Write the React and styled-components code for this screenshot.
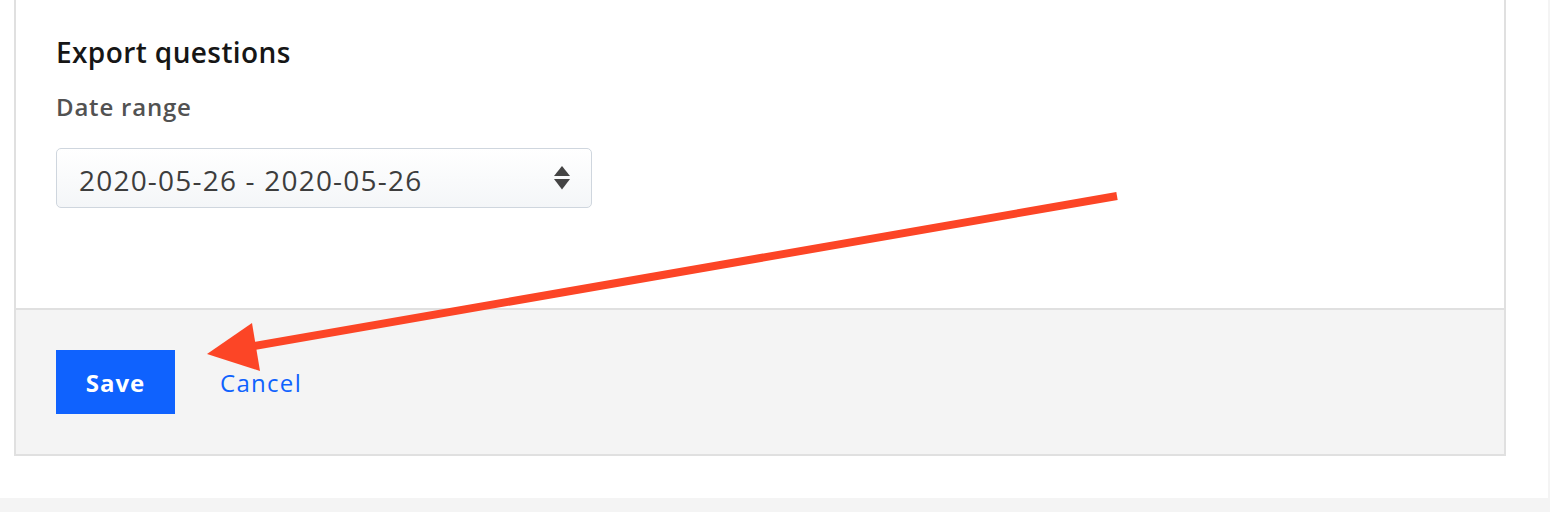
import React from 'react';
import styled, { createGlobalStyle } from 'styled-components';

const BLUE = '#0f62fe';
const BORDER = '#e0e0e0';
const FONT = "'Open Sans', 'Liberation Sans', Arial, sans-serif";

const GlobalStyle = createGlobalStyle`
  html, body {
    margin: 0;
    padding: 0;
    background: #f4f4f4;
    font-family: ${FONT};
  }
  * {
    box-sizing: border-box;
  }
`;

const Page = styled.div`
  position: relative;
  width: 1548px;
  height: 498px;
  background: #fff;
  padding: 0 42px 42px 14px;
  overflow: hidden;
`;

const Card = styled.div`
  border: 2px solid ${BORDER};
  border-top: none;
`;

const CardBody = styled.div`
  height: 308px;
  padding: 35px 40px 0 40px;
`;

const Title = styled.h2`
  margin: 0;
  font-size: 28px;
  line-height: 34px;
  font-weight: 600;
  letter-spacing: 0.4px;
  color: #161616;
`;

const Label = styled.label`
  display: block;
  margin-top: 23px;
  font-size: 24px;
  line-height: 30px;
  font-weight: 600;
  letter-spacing: 0.8px;
  color: #525252;
`;

const Select = styled.div`
  margin-top: 26px;
  width: 536px;
  height: 60px;
  display: flex;
  align-items: center;
  justify-content: space-between;
  padding: 3px 20px 0 22px;
  border: 1px solid #cfd6de;
  border-radius: 5px;
  background: linear-gradient(#ffffff, #f4f6f8);
  font-size: 28px;
  letter-spacing: 1.2px;
  color: #3d3d3d;

  svg {
    margin-top: -3px;
  }
`;

const Footer = styled.div`
  display: flex;
  align-items: center;
  gap: 45px;
  padding: 40px;
  background: #f4f4f4;
  border-top: 2px solid ${BORDER};
`;

const Button = styled.button`
  width: 119px;
  height: 64px;
  border: none;
  background: ${BLUE};
  color: #fff;
  font-family: ${FONT};
  font-size: 24px;
  font-weight: 700;
  letter-spacing: 1px;
  cursor: pointer;
`;

const LinkButton = styled.a`
  color: ${BLUE};
  font-size: 24px;
  letter-spacing: 1.3px;
  text-decoration: none;
  cursor: pointer;
`;

const Annotation = styled.svg`
  position: absolute;
  left: 0;
  top: 0;
  pointer-events: none;
`;

function UpDownIcon() {
  return (
    <svg width="18" height="24" viewBox="0 0 18 24">
      <polygon points="9,0 17,10 1,10" fill="#444" />
      <polygon points="1,13 17,13 9,23.5" fill="#444" />
    </svg>
  );
}

export default function App() {
  return (
    <>
      <GlobalStyle />
      <Page>
        <Card>
          <CardBody>
            <Title>Export questions</Title>
            <Label>Date range</Label>
            <Select>
              <span>2020-05-26 - 2020-05-26</span>
              <UpDownIcon />
            </Select>
          </CardBody>
          <Footer>
            <Button>Save</Button>
            <LinkButton>Cancel</LinkButton>
          </Footer>
        </Card>
        <Annotation width="1548" height="498">
          <line x1="1117" y1="196" x2="254" y2="346" stroke="#fc4526" strokeWidth="8" />
          <polygon points="207,354 252,323 260,371" fill="#fc4526" />
        </Annotation>
      </Page>
    </>
  );
}
